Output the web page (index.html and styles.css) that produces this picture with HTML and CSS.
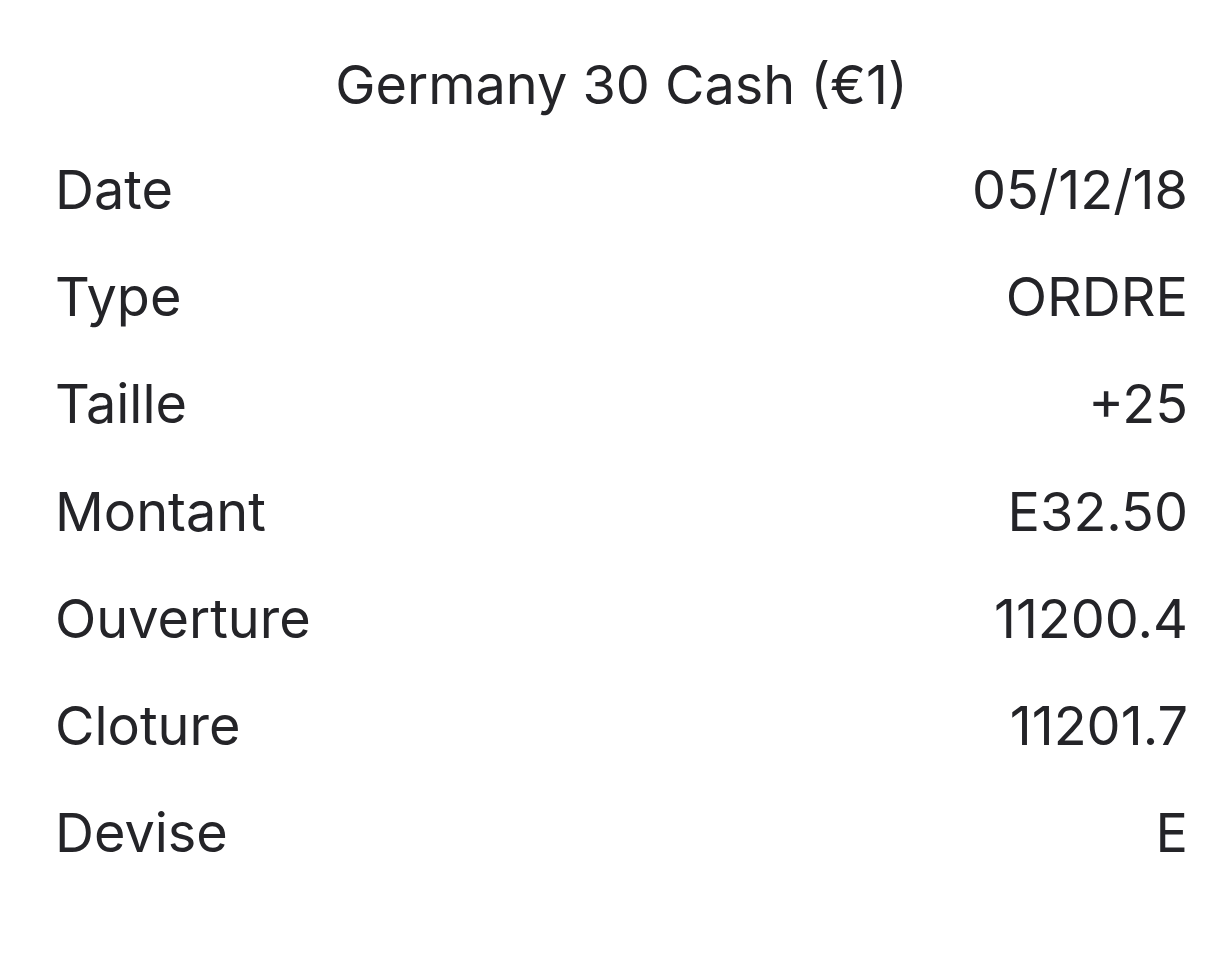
FILE: index.html
```html
<!DOCTYPE html>
<html lang="fr">
<head>
<meta charset="utf-8">
<title>Germany 30 Cash</title>
<link rel="stylesheet" href="styles.css">
</head>
<body>
<main class="sheet">
  <h1 class="title">Germany 30 Cash (€1)</h1>
  <dl class="details">
    <div class="row"><dt>Date</dt><dd>05/12/18</dd></div>
    <div class="row"><dt>Type</dt><dd>ORDRE</dd></div>
    <div class="row"><dt>Taille</dt><dd>+25</dd></div>
    <div class="row"><dt>Montant</dt><dd>E32.50</dd></div>
    <div class="row"><dt>Ouverture</dt><dd>11200.4</dd></div>
    <div class="row"><dt>Cloture</dt><dd>11201.7</dd></div>
    <div class="row"><dt>Devise</dt><dd>E</dd></div>
  </dl>
</main>
</body>
</html>
```
FILE: styles.css
```css
html, body {
  margin: 0;
  padding: 0;
  background: #ffffff;
}
body {
  font-family: Inter, "Noto Sans", "Liberation Sans", sans-serif;
  color: #242428;
}
.sheet {
  padding: 50px 32px 0 55px;
}
.title {
  margin: 0;
  font-size: 54px;
  font-weight: 400;
  text-align: center;
  line-height: 70px;
  padding-left: 0;
}
.details {
  margin: 0;
  padding-top: 16px;
}
.row {
  display: flex;
  justify-content: space-between;
  align-items: baseline;
  height: 107.2px;
  line-height: 107px;
  font-size: 54px;
}
.row dt, .row dd {
  margin: 0;
}
```
